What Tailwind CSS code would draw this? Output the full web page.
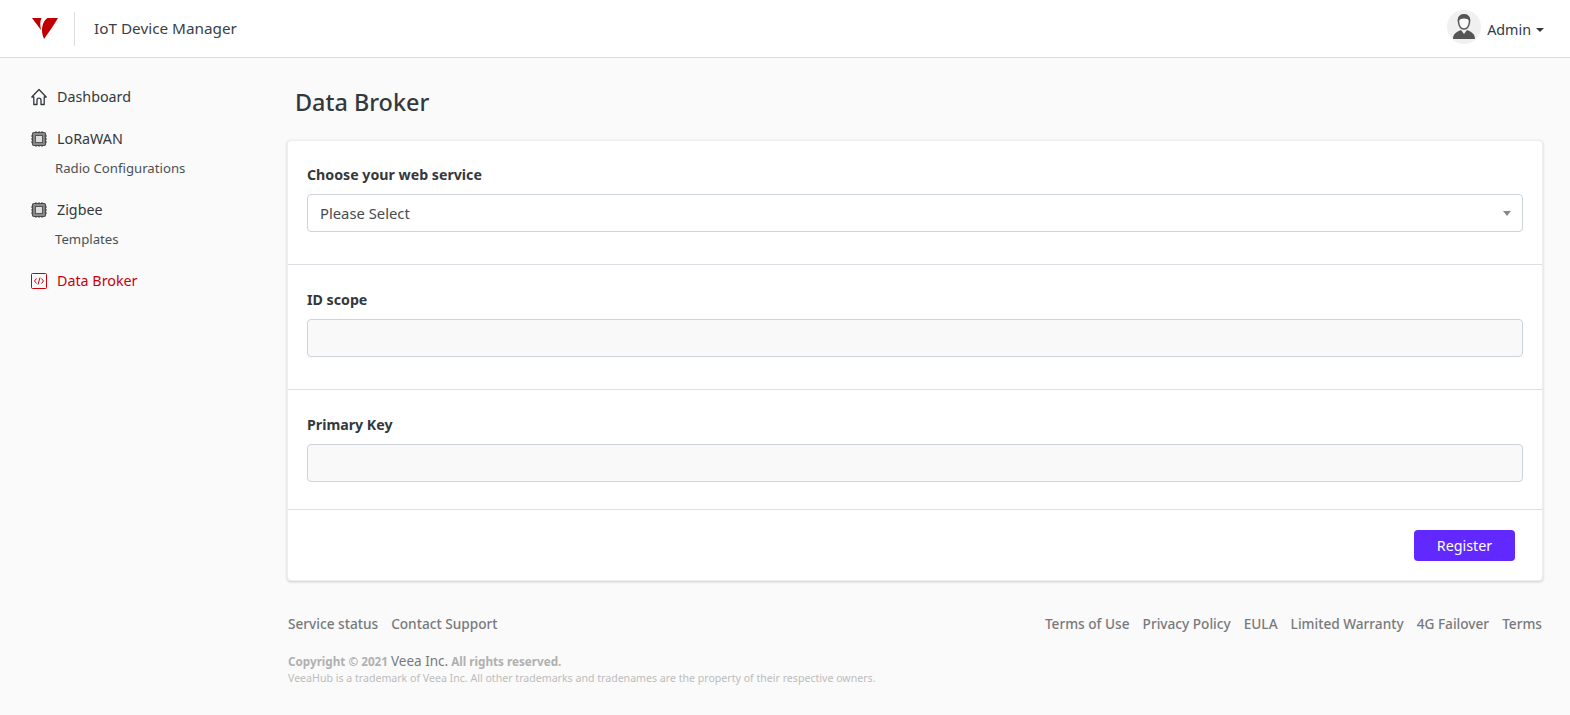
<!DOCTYPE html>
<html lang="en">
<head>
  <meta charset="UTF-8" />
  <title>IoT Device Manager</title>
  <script src="https://cdn.jsdelivr.net/npm/@tailwindcss/browser@4"></script>
</head>
<body class="bg-[#fafafa] h-[715px] overflow-hidden font-['Noto_Sans',sans-serif] text-[#33383d]">
  <header class="h-[58px] bg-white border-b border-[#dcdcdc] flex items-center justify-between pl-[31px] pr-[26px]">
    <div class="flex items-center">
      <svg class="w-[28px] h-[23px]" viewBox="0 0 28 23">
        <path d="M1 1 H10.500 C9 4 9 8 10 13 Z" fill="#c00000"/>
        <path d="M27 1 H16.500 C13 3 11 8 11 14 C11 17 12 19 13 22 C18 15 23 8 27 1 Z" fill="#c00000"/>
      </svg>
      <div class="w-px h-[34px] bg-[#dedede] ml-[15px] mr-[19px]"></div>
      <span class="text-[15.300px] text-[#3a4047]">IoT Device Manager</span>
    </div>
    <div class="flex items-center">
      <div class="w-[34px] h-[34px] rounded-full bg-[#f0f0f0] mb-[4px]">
        <svg class="w-[34px] h-[34px]" viewBox="0 0 34 34">
          <path d="M17 5 C13 5 11 8 11.500 12 C12 16 14 19 17 19 C20 19 22 16 22.500 12 C23 8 21 5 17 5 Z" fill="#fafafa" stroke="#555555" stroke-width="1.500"/>
          <path d="M11 12 C10 7 13 4 17 4 C21 4 24 7 23 12 C22 9.500 20 8.500 17 8.500 C14 8.500 12 9.500 11 12 Z" fill="#555555"/>
          <path d="M6 29 C6 24 9 22 14 20 L17 24 L20 20 C25 22 28 24 28 29 Z" fill="#555555"/>
        </svg>
      </div>
      <span class="ml-[6px] mt-[3px] text-[14.300px] text-[#2f3a45]">Admin</span>
      <span class="ml-[5px] mt-[3px] w-0 h-0 border-x-[4.500px] border-x-transparent border-t-[4px] border-t-[#33383d]"></span>
    </div>
  </header>

  <div class="flex">
    <aside class="w-[287px] shrink-0 pl-[31px] pt-[29px] text-[14.300px]">
      <a class="flex items-center gap-[10px] h-[20px] text-[#33383d]">
        <svg class="w-[16px] h-[18px]" viewBox="0 0 16 18" fill="none" stroke="#33383d" stroke-width="1.300">
          <path d="M0.800 9 L8 1.500 L15.200 9 H13.200 V16.500 H10 V12 C10 9.500 6 9.500 6 12 V16.500 H2.800 V9 Z" stroke-linejoin="round"/>
        </svg>
        Dashboard
      </a>
      <a class="flex items-center gap-[10px] h-[20px] mt-[22px] text-[#33383d]">
        <svg class="w-[16px] h-[16px]" viewBox="0 0 16 16" fill="none" stroke="#4a4a4a">
          <rect x="1.500" y="1.500" width="13" height="13" rx="1.500" fill="#8a8a8a" stroke-width="1.200"/>
          <rect x="4.500" y="4.500" width="7" height="7" fill="#dddddd" stroke="#555555"/>
          <path d="M5 0 V1 M8 0 V1 M11 0 V1 M5 15 V16 M8 15 V16 M11 15 V16 M0 5 H1 M0 8 H1 M0 11 H1 M15 5 H16 M15 8 H16 M15 11 H16"/>
        </svg>
        LoRaWAN
      </a>
      <div class="ml-[24px] mt-[9px] h-[20px] leading-[20px] text-[13.200px] text-[#4a5057]">Radio Configurations</div>
      <a class="flex items-center gap-[10px] h-[20px] mt-[22px] text-[#33383d]">
        <svg class="w-[16px] h-[16px]" viewBox="0 0 16 16" fill="none" stroke="#4a4a4a">
          <rect x="1.500" y="1.500" width="13" height="13" rx="1.500" fill="#8a8a8a" stroke-width="1.200"/>
          <rect x="4.500" y="4.500" width="7" height="7" fill="#dddddd" stroke="#555555"/>
          <path d="M5 0 V1 M8 0 V1 M11 0 V1 M5 15 V16 M8 15 V16 M11 15 V16 M0 5 H1 M0 8 H1 M0 11 H1 M15 5 H16 M15 8 H16 M15 11 H16"/>
        </svg>
        Zigbee
      </a>
      <div class="ml-[24px] mt-[9px] h-[20px] leading-[20px] text-[13.200px] text-[#4a5057]">Templates</div>
      <a class="flex items-center gap-[10px] h-[20px] mt-[22px] text-[#c8000a]">
        <svg class="w-[16px] h-[16px]" viewBox="0 0 16 16" fill="none" stroke="#c8000a">
          <rect x="0.500" y="0.500" width="15" height="15" rx="1"/>
          <path d="M5.500 5.500 L3.500 8 L5.500 10.500 M10.500 5.500 L12.500 8 L10.500 10.500 M9 4.500 L7 11.500"/>
        </svg>
        Data Broker
      </a>
    </aside>

    <main class="w-[1256px] shrink-0">
      <h1 class="ml-[8px] mt-[27px] h-[34px] leading-[34px] text-[23.400px] font-medium text-[#33383d]">Data Broker</h1>
      <section class="mt-[21px] h-[441px] bg-white rounded-[4px] border border-[#eeeeee] shadow-[0_1px_3px_rgba(0,0,0,0.18)] flex flex-col">
        <div class="h-[124px] px-[19px] pt-[24px] border-b border-[#dcdfe3]">
          <label class="block h-[20px] leading-[20px] text-[14.200px] font-bold">Choose your web service</label>
          <div class="mt-[9px] h-[38px] rounded-[4px] border border-[#cdd3dc] bg-white flex items-center justify-between pl-[12px] pr-[11px]">
            <span class="text-[14.800px] text-[#464b50]">Please Select</span>
            <span class="w-0 h-0 border-x-[4px] border-x-transparent border-t-[5px] border-t-[#888888]"></span>
          </div>
        </div>
        <div class="h-[125px] px-[19px] pt-[25px] border-b border-[#dcdfe3]">
          <label class="block h-[20px] leading-[20px] text-[14.200px] font-bold">ID scope</label>
          <div class="mt-[9px] h-[38px] rounded-[4px] border border-[#cdd3dc] bg-[#f9f9f9]"></div>
        </div>
        <div class="h-[120px] px-[19px] pt-[25px] border-b border-[#dcdfe3]">
          <label class="block h-[20px] leading-[20px] text-[14.200px] font-bold">Primary Key</label>
          <div class="mt-[9px] h-[38px] rounded-[4px] border border-[#cdd3dc] bg-[#f9f9f9]"></div>
        </div>
        <div class="flex justify-end pt-[20px] pr-[27px]">
          <button class="w-[101px] h-[31px] rounded-[4px] bg-[#6128ff] text-white text-[14.300px]">Register</button>
        </div>
      </section>

      <footer class="mt-[33px] text-[13.650px] font-medium text-[#77797c]">
        <div class="flex justify-between h-[20px] leading-[20px]">
          <div class="flex gap-[13px] ml-[1px]"><a>Service status</a><a>Contact Support</a></div>
          <div class="flex gap-[13px] pr-[1px]"><a>Terms of Use</a><a>Privacy Policy</a><a>EULA</a><a>Limited Warranty</a><a>4G Failover</a><a>Terms</a></div>
        </div>
        <p class="mt-[19px] ml-[1px] h-[18px] leading-[16px] text-[11.700px] font-bold text-[#b0b0b0]">Copyright © 2021 <span class="text-[13.500px] font-normal text-[#77797c]">Veea Inc.</span> All rights reserved.</p>
        <p class="ml-[1px] h-[14px] leading-[14px] text-[10.600px] font-normal text-[#bcbcbc]">VeeaHub is a trademark of Veea Inc. All other trademarks and tradenames are the property of their respective owners.</p>
      </footer>
    </main>
  </div>
</body>
</html>
